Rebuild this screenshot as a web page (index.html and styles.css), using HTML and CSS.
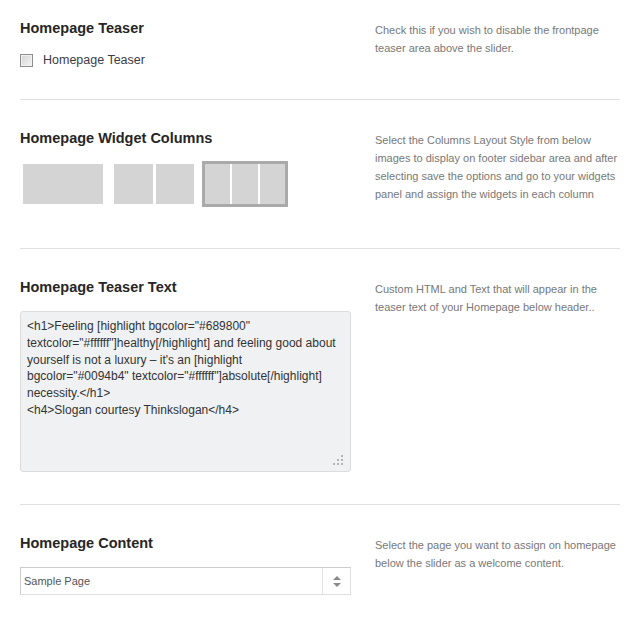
FILE: index.html
```html
<!DOCTYPE html>
<html lang="en">
<head>
<meta charset="utf-8">
<title>Homepage Options</title>
<link rel="stylesheet" href="styles.css">
</head>
<body>
<div class="page">
  <section class="section section-teaser">
    <div class="col-left">
      <h3 class="heading">Homepage Teaser</h3>
      <label class="check-row">
        <input type="checkbox" class="check">
        <span class="check-label">Homepage Teaser</span>
      </label>
    </div>
    <p class="desc">Check this if you wish to disable the frontpage teaser area above the slider.</p>
  </section>

  <section class="section section-columns">
    <div class="col-left">
      <h3 class="heading">Homepage Widget Columns</h3>
      <div class="layouts">
        <div class="layout">
          <div class="layout-inner"><span class="cell"></span></div>
        </div>
        <div class="layout">
          <div class="layout-inner two"><span class="cell"></span><span class="cell"></span></div>
        </div>
        <div class="layout selected">
          <div class="layout-inner three"><span class="cell"></span><span class="cell"></span><span class="cell"></span></div>
        </div>
      </div>
    </div>
    <p class="desc">Select the Columns Layout Style from below images to display on footer sidebar area and after selecting save the options and go to your widgets panel and assign the widgets in each column</p>
  </section>

  <section class="section section-text">
    <div class="col-left">
      <h3 class="heading">Homepage Teaser Text</h3>
      <div class="textarea-wrap">
        <textarea class="textarea" spellcheck="false">&lt;h1&gt;Feeling [highlight bgcolor="#689800" textcolor="#ffffff"]healthy[/highlight] and feeling good about yourself is not a luxury – it's an [highlight bgcolor="#0094b4" textcolor="#ffffff"]absolute[/highlight] necessity.&lt;/h1&gt;
&lt;h4&gt;Slogan courtesy Thinkslogan&lt;/h4&gt;</textarea>
        <svg class="grip" width="10" height="10" viewBox="0 0 10 10" aria-hidden="true">
          <rect x="8" y="0" width="2" height="2" fill="#b5b5b5"/>
          <rect x="4" y="4" width="2" height="2" fill="#b5b5b5"/>
          <rect x="8" y="4" width="2" height="2" fill="#b5b5b5"/>
          <rect x="0" y="8" width="2" height="2" fill="#b5b5b5"/>
          <rect x="4" y="8" width="2" height="2" fill="#b5b5b5"/>
          <rect x="8" y="8" width="2" height="2" fill="#b5b5b5"/>
        </svg>
      </div>
    </div>
    <p class="desc">Custom HTML and Text that will appear in the teaser text of your Homepage below header..</p>
  </section>

  <section class="section section-content">
    <div class="col-left">
      <h3 class="heading">Homepage Content</h3>
      <div class="select">
        <span class="select-value">Sample Page</span>
        <span class="select-arrow">
          <svg width="8" height="11" viewBox="0 0 8 11" aria-hidden="true">
            <path d="M4 0 L8 4 L0 4 Z" fill="#8a8a8a"/>
            <path d="M0 7 L8 7 L4 11 Z" fill="#8a8a8a"/>
          </svg>
        </span>
      </div>
    </div>
    <p class="desc">Select the page you want to assign on homepage below the slider as a welcome content.</p>
  </section>
</div>
</body>
</html>
```

FILE: styles.css
```css
* { box-sizing: border-box; }

html, body {
  margin: 0;
  padding: 0;
  background: #ffffff;
}

body {
  font-family: "Liberation Sans", Arial, sans-serif;
  color: #333;
}

.page {
  width: 640px;
  padding: 0 20px;
}

.section {
  display: flex;
  align-items: flex-start;
  gap: 24px;
  padding-top: 28px;
  border-bottom: 1px solid #e1e1e1;
}

.section:first-child { padding-top: 18px; }
.section:last-child { border-bottom: none; }

.section-teaser { padding-bottom: 29px; }
.section-columns { padding-bottom: 41px; }
.section-text { padding-bottom: 32px; }
.section-content { padding-bottom: 38px; }

.col-left {
  width: 331px;
  flex: none;
}

.heading {
  margin: 0;
  font-size: 14.5px;
  line-height: 20px;
  font-weight: bold;
  color: #262626;
}

.desc {
  margin: 0;
  padding-top: 3px;
  width: 245px;
  font-size: 11px;
  line-height: 18px;
  color: #787878;
}

/* checkbox */
.check-row {
  display: flex;
  align-items: center;
  gap: 10px;
  height: 20px;
  margin-top: 12px;
}

.check {
  appearance: none;
  -webkit-appearance: none;
  margin: 0;
  width: 13px;
  height: 13px;
  border: 1px solid #8e8e8e;
  background: linear-gradient(135deg, #d4d4d4, #f4f4f4);
  box-shadow: inset 0 0 0 1px #f2f2f2;
}

.check-label {
  font-size: 12.5px;
  color: #3c3c46;
}

/* column layouts */
.layouts {
  display: flex;
  gap: 5px;
  margin-top: 13px;
}

.layout {
  border: 3px solid transparent;
}

.layout.selected {
  border-color: #aaaaaa;
}

.layout-inner {
  display: flex;
  width: 80px;
  height: 40px;
  gap: 3px;
}

.layout-inner.three { gap: 2px; }

.cell {
  flex: 1;
  background: #d4d4d4;
}

/* textarea */
.textarea-wrap {
  position: relative;
  margin-top: 14px;
}

.textarea {
  display: block;
  width: 331px;
  height: 161px;
  margin: 0;
  padding: 6px 6px 4px;
  border: 1px solid #dcdcdc;
  border-radius: 3px;
  background: #f0f1f2;
  font-family: "Liberation Sans", Arial, sans-serif;
  font-size: 12px;
  line-height: 16.8px;
  color: #333;
  resize: none;
  overflow: hidden;
  outline: none;
}

.grip {
  position: absolute;
  right: 8px;
  bottom: 7px;
}

/* select */
.select {
  display: flex;
  height: 28px;
  margin-top: 14px;
  border: 1px solid #dedede;
  border-top-color: #cccccc;
  border-left-color: #cccccc;
  background: #ffffff;
}

.select-value {
  flex: 1;
  display: flex;
  align-items: center;
  padding-left: 3px;
  font-size: 11px;
  color: #555;
}

.select-arrow {
  width: 28px;
  display: flex;
  align-items: center;
  justify-content: center;
  border-left: 1px solid #e3e3e3;
}
```
